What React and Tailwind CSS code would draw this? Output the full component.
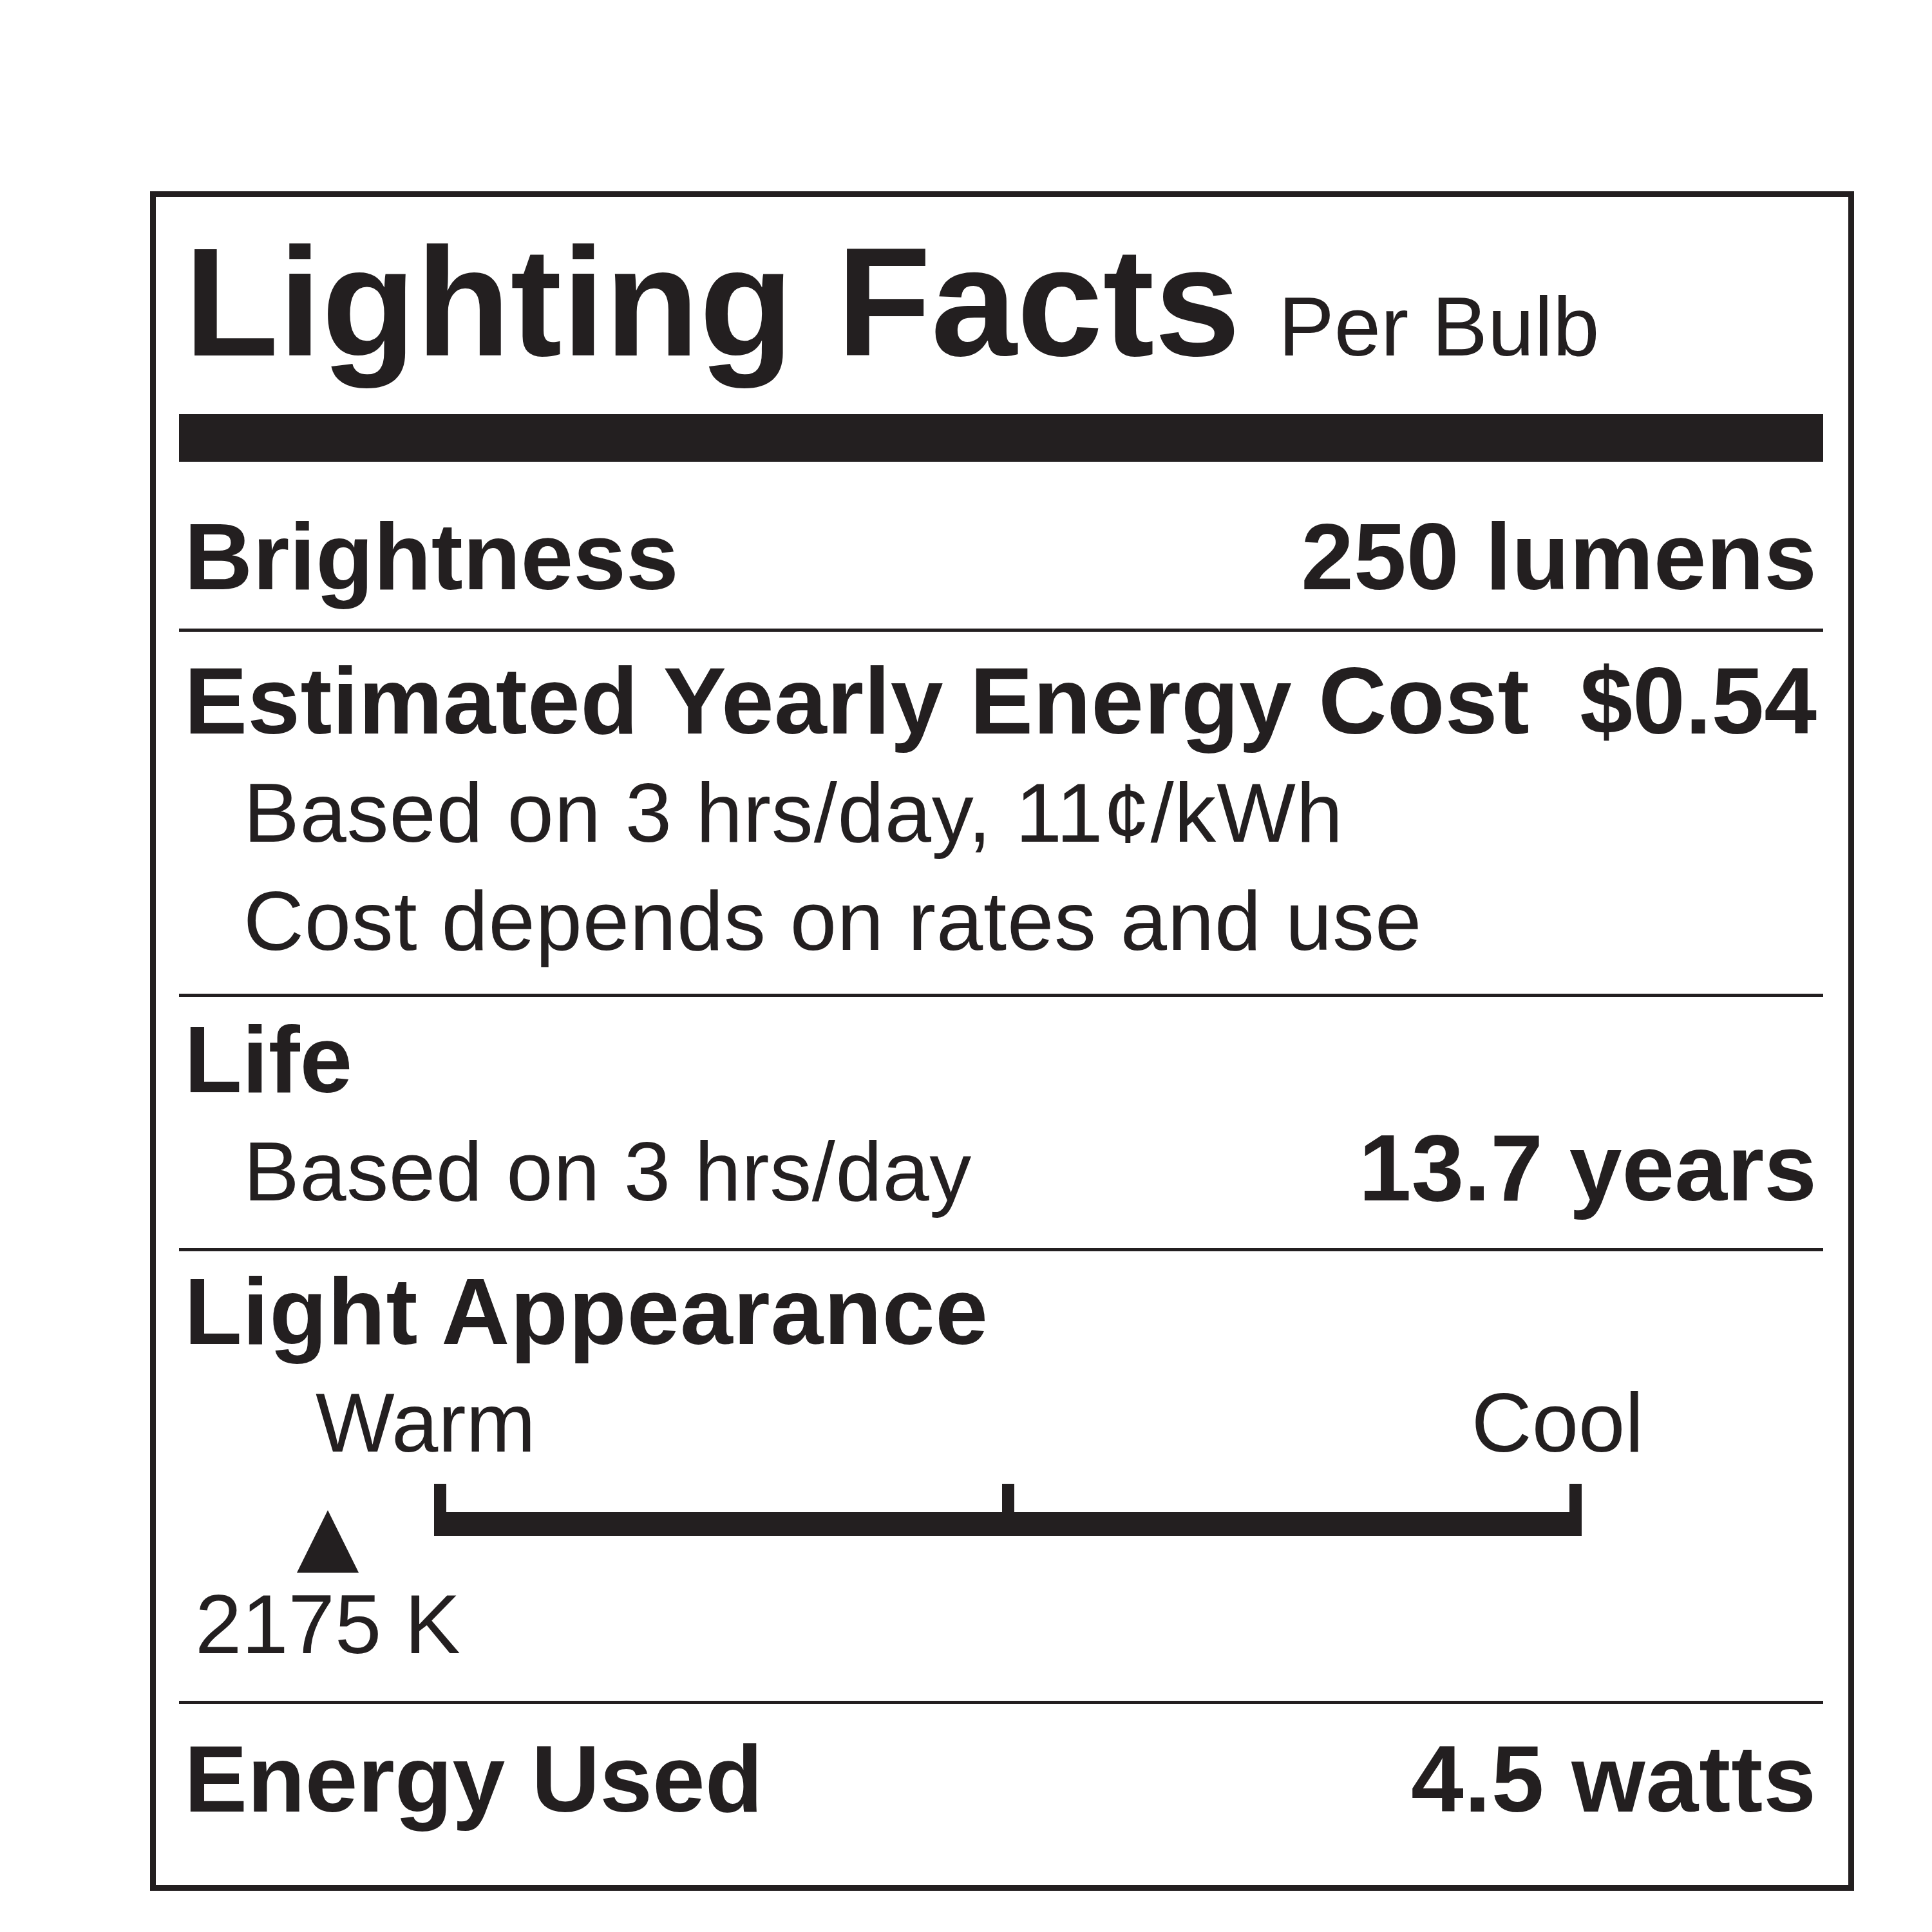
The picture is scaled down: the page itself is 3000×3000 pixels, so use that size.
const ink = '#231f20'

function Rule() {
  return <div className="h-[5px] w-full bg-[#231f20]" />
}

function ScaleBar() {
  return (
    <svg width="1782" height="81" viewBox="0 0 1782 81" className="ml-[396px] mt-[30px] block">
      <rect x="0" y="44" width="1782" height="37" fill={ink} />
      <rect x="0" y="0" width="19" height="81" fill={ink} />
      <rect x="882" y="0" width="19" height="81" fill={ink} />
      <rect x="1763" y="0" width="19" height="81" fill={ink} />
    </svg>
  )
}

export default function App() {
  return (
    <div className="bg-white pl-[233px] pt-[297px] pb-[64px] font-['Liberation_Sans',Arial,sans-serif] text-[#231f20]">
      <div className="w-[2646px] border-[9px] border-[#231f20] pl-[36px] pr-[39px] pt-[43px] pb-[91px]">
        {/* header */}
        <div className="flex items-baseline pl-[8px] whitespace-nowrap">
          <span className="text-[240px] font-bold leading-[240px]">Lighting Facts</span>
          <span className="ml-[59px] text-[130px] leading-[130px]">Per Bulb</span>
        </div>
        <div className="mt-[54px] h-[74px] w-full bg-[#231f20]" />

        {/* brightness */}
        <div className="mt-[74px] flex items-baseline justify-between pl-[8px] pr-[10px] text-[147px] font-bold leading-[147px] whitespace-nowrap">
          <span>Brightness</span>
          <span>250 lumens</span>
        </div>
        <div className="mt-[38px]">
          <Rule />
        </div>

        {/* yearly cost */}
        <div className="mt-[34px] flex items-baseline justify-between pl-[8px] pr-[10px] text-[147px] font-bold leading-[147px] whitespace-nowrap">
          <span className="tracking-[0.3px]">Estimated Yearly Energy Cost</span>
          <span>$0.54</span>
        </div>
        <div className="mt-[16px] pl-[100px] text-[130px] leading-[168px] tracking-[0.8px] whitespace-nowrap">
          <p>Based on 3 hrs/day, 11¢/kWh</p>
          <p>Cost depends on rates and use</p>
        </div>
        <div className="mt-[29px]">
          <Rule />
        </div>

        {/* life */}
        <div className="mt-[24px] pl-[8px] text-[147px] font-bold leading-[147px]">Life</div>
        <div className="mt-[16px] flex items-baseline justify-between pl-[100px] pr-[10px] whitespace-nowrap">
          <span className="text-[130px] leading-[168px] tracking-[0.6px]">Based on 3 hrs/day</span>
          <span className="text-[147px] font-bold leading-[147px]">13.7 years</span>
        </div>
        <div className="mt-[35px]">
          <Rule />
        </div>

        {/* light appearance */}
        <div className="mt-[20px] pl-[8px] text-[147px] font-bold leading-[147px] tracking-[0.8px] whitespace-nowrap">Light Appearance</div>
        <div className="mt-[34px] flex text-[130px] leading-[130px] whitespace-nowrap">
          <span className="ml-[212px]">Warm</span>
          <span className="ml-[1453px]">Cool</span>
        </div>
        <ScaleBar />
        <div className="ml-[25px] -mt-[40px] inline-flex flex-col items-center">
          <svg width="96" height="97" viewBox="0 0 96 97" className="block">
            <polygon points="48,0 96,97 0,97" fill={ink} />
          </svg>
          <span className="mt-[15px] text-[130px] leading-[130px] whitespace-nowrap">2175 K</span>
        </div>
        <div className="mt-[54px]">
          <Rule />
        </div>

        {/* energy used */}
        <div className="mt-[43px] flex items-baseline justify-between pl-[8px] pr-[10px] text-[147px] font-bold leading-[147px] whitespace-nowrap">
          <span>Energy Used</span>
          <span className="tracking-[1px]">4.5 watts</span>
        </div>
      </div>
    </div>
  )
}
